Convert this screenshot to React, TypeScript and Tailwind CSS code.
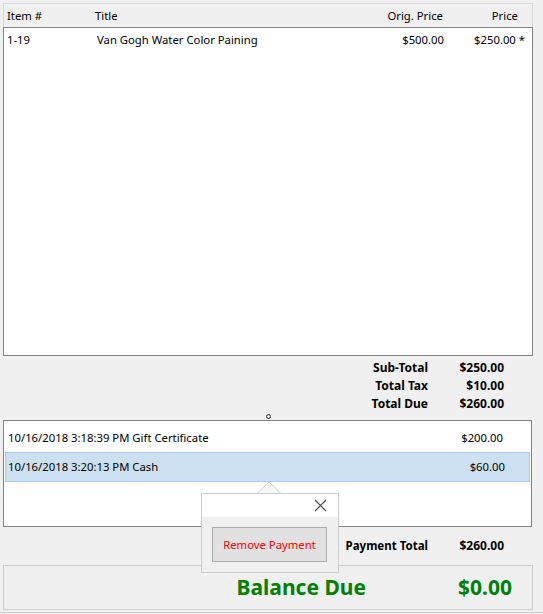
import React from "react";

const font = { fontFamily: '"Noto Sans", "Open Sans", Arial, sans-serif' };

export default function App() {
  return (
    <div
      className="relative w-[543px] h-[614px] overflow-hidden bg-[#f0f0f0] text-[11.3px] text-black leading-none"
      style={font}
    >
      <div className="flex flex-col pl-[3px] pr-[10px] pt-[3px]">
        {/* Items list */}
        <div className="flex flex-col">
          <div className="flex items-center h-[24px] border-t border-l border-r border-[#dadada] pl-[3px] pr-[14px]">
            <span className="w-[88px]">Item #</span>
            <span className="flex-1">Title</span>
            <span className="w-[100px] text-right">Orig. Price</span>
            <span className="w-[75px] text-right">Price</span>
          </div>
          <div className="h-[329px] border border-[#828282] bg-white">
            <div className="flex items-center h-[24px] pl-[3px] pr-[7px]">
              <span className="w-[90px]">1-19</span>
              <span className="flex-1">Van Gogh Water Color Paining</span>
              <span className="w-[100px] text-right">$500.00</span>
              <span className="w-[81px] text-right">$250.00 *</span>
            </div>
          </div>
        </div>

        {/* Totals */}
        <div className="flex flex-col h-[64px] pt-[3px] pr-[29px] font-bold text-[12px]">
          {[
            ["Sub-Total", "$250.00"],
            ["Total Tax", "$10.00"],
            ["Total Due", "$260.00"],
          ].map(([l, v]) => (
            <div key={l} className="flex justify-end items-center h-[18px]">
              <span className="text-right">{l}</span>
              <span className="w-[76px] text-right">{v}</span>
            </div>
          ))}
        </div>

        {/* Payments list */}
        <div className="h-[107px] w-[529px] border border-[#828282] bg-white flex flex-col pt-[2px] pl-[1px] pr-[1px]">
          <div className="flex items-center h-[29px] pl-[3px] pr-[27px]">
            <span className="flex-1">10/16/2018 3:18:39 PM Gift Certificate</span>
            <span className="text-right">$200.00</span>
          </div>
          <div className="flex items-center h-[30px] pl-[2px] pr-[24px] bg-[#cce0f1] border border-[#a9cdee]">
            <span className="flex-1">10/16/2018 3:20:13 PM Cash</span>
            <span className="text-right">$60.00</span>
          </div>
        </div>

        {/* Payment total */}
        <div className="flex justify-end items-center h-[38px] pr-[29px] font-bold text-[11.5px]">
          <span>Payment Total</span>
          <span className="w-[76px] text-right text-[12px]">$260.00</span>
        </div>

        {/* Balance due */}
        <div className="h-[45px] border border-[#cccccc] flex items-center justify-end pr-[20px] text-[#008000] font-bold text-[21px]">
          <span>Balance Due</span>
          <span className="w-[146px] text-right">$0.00</span>
        </div>
      </div>
      <div className="absolute left-0 right-0 top-[612px] border-t border-[#cccccc]" />

      {/* grip dot */}
      <div className="absolute left-[266px] top-[414px] w-[5px] h-[5px] rounded-full border border-[#333]" />

      {/* Popup arrow */}
      <svg className="absolute left-[256px] top-[481px]" width="27" height="13" viewBox="0 0 27 13">
        <polygon points="1,12.5 13,1 25,12.5" fill="#f7f7f7" stroke="#cccccc" strokeWidth="1" />
      </svg>

      {/* Popup */}
      <div className="absolute left-[201px] top-[493px] w-[138px] h-[80px] border border-[#cccccc] bg-[#f0f0f0] flex flex-col">
        <div className="h-[23px] bg-white flex items-center justify-end pr-[11px]">
          <svg width="13" height="13" viewBox="0 0 13 13">
            <path d="M1 1 L12 12 M12 1 L1 12" stroke="#555" strokeWidth="1.3" fill="none" />
          </svg>
        </div>
        <div className="flex pl-[10px] pt-[10px]">
          <div className="w-[115px] h-[35px] bg-[#e1e1e1] border border-[#adadad] flex items-center justify-center text-[#ff0000]">
            Remove Payment
          </div>
        </div>
      </div>
    </div>
  );
}
